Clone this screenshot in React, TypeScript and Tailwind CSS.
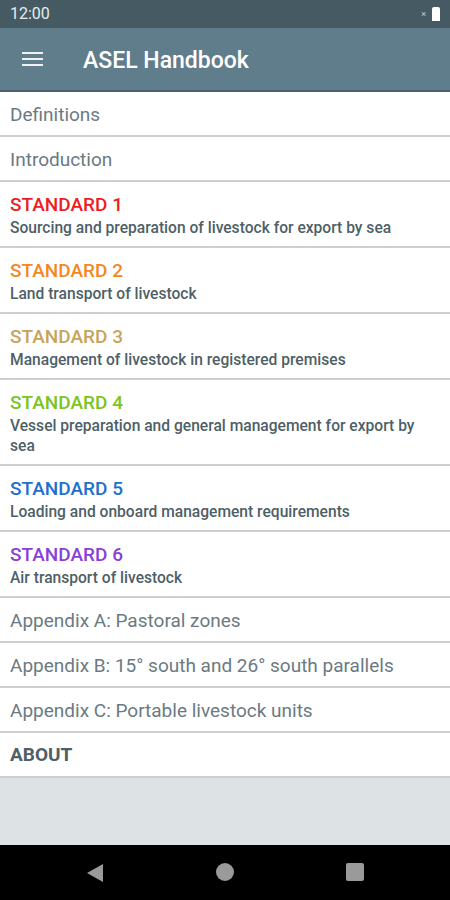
import React from "react";

const standards = [
  { t: "STANDARD 1", s: "Sourcing and preparation of livestock for export by sea", c: "text-[#ee1d23]" },
  { t: "STANDARD 2", s: "Land transport of livestock", c: "text-[#f5871f]" },
  { t: "STANDARD 3", s: "Management of livestock in registered premises", c: "text-[#c8a45b]" },
  { t: "STANDARD 4", s: "Vessel preparation and general management for export by sea", c: "text-[#7cc41f]" },
  { t: "STANDARD 5", s: "Loading and onboard management requirements", c: "text-[#1f6fce]" },
  { t: "STANDARD 6", s: "Air transport of livestock", c: "text-[#8b3fd9]" },
];

function Plain({ text }: { text: string }) {
  return (
    <div className="h-[45px] border-b-2 border-[#cbcfd1] px-[10px] pt-[3px] flex items-center text-[19px] text-[#6b7a82] bg-white">
      {text}
    </div>
  );
}

export default function App() {
  return (
    <div className="w-[450px] h-[900px] flex flex-col bg-[#dde3e5] overflow-hidden" style={{ fontFamily: "Roboto, 'Noto Sans', sans-serif" }}>
      <div className="h-[28px] bg-[#465a63] flex items-center justify-between px-[10px] shrink-0">
        <span className="text-[#e6ecef] text-[16px]">12:00</span>
        <div className="flex items-end gap-[6px]">
          <span className="text-[#c8d0d4] text-[9px] leading-[9px] mb-[2px]">×</span>
          <span className="w-[8px] h-[14px] bg-white rounded-t-[2px]" />
        </div>
      </div>
      <div className="h-[64px] bg-[#607d8b] border-b-2 border-[#4b626d] flex items-center shrink-0">
        <div className="w-[83px] flex pl-[22px]">
          <svg width="21" height="14" viewBox="0 0 21 14">
            <rect x="0" y="0" width="21" height="2" fill="#eef2f4" />
            <rect x="0" y="6" width="21" height="2" fill="#eef2f4" />
            <rect x="0" y="12" width="21" height="2" fill="#eef2f4" />
          </svg>
        </div>
        <span className="text-white text-[23px] font-medium pt-[4px]">ASEL Handbook</span>
      </div>
      <div className="flex flex-col">
        <Plain text="Definitions" />
        <Plain text="Introduction" />
        {standards.map((s) => (
          <div key={s.t} className="min-h-[66px] border-b-2 border-[#cbcfd1] px-[10px] pt-[12px] pb-[8px] bg-white flex flex-col">
            <span className={`text-[19px] font-medium leading-[22px] ${s.c}`}>{s.t}</span>
            <span className="text-[15.6px] font-medium text-[#4f5f67] leading-[20px] mt-[2px]">{s.s}</span>
          </div>
        ))}
        <Plain text="Appendix A: Pastoral zones" />
        <Plain text="Appendix B: 15° south and 26° south parallels" />
        <Plain text="Appendix C: Portable livestock units" />
        <div className="h-[45px] border-b-2 border-[#cbcfd1] px-[10px] pt-[2px] flex items-center text-[19px] font-bold text-[#4f5f67] bg-white">
          ABOUT
        </div>
      </div>
      <div className="flex-1" />
      <div className="h-[55px] bg-black flex items-center shrink-0">
        <div className="w-[450px] flex justify-between px-[86px]">
          <svg width="18" height="20" viewBox="0 0 18 20">
            <polygon points="17,1 17,19 1,10" fill="#9a9a9a" />
          </svg>
          <svg width="18" height="18" viewBox="0 0 18 18">
            <circle cx="9" cy="9" r="9" fill="#9a9a9a" />
          </svg>
          <svg width="18" height="18" viewBox="0 0 18 18">
            <rect x="0" y="0" width="18" height="18" rx="2" fill="#9a9a9a" />
          </svg>
        </div>
      </div>
    </div>
  );
}
